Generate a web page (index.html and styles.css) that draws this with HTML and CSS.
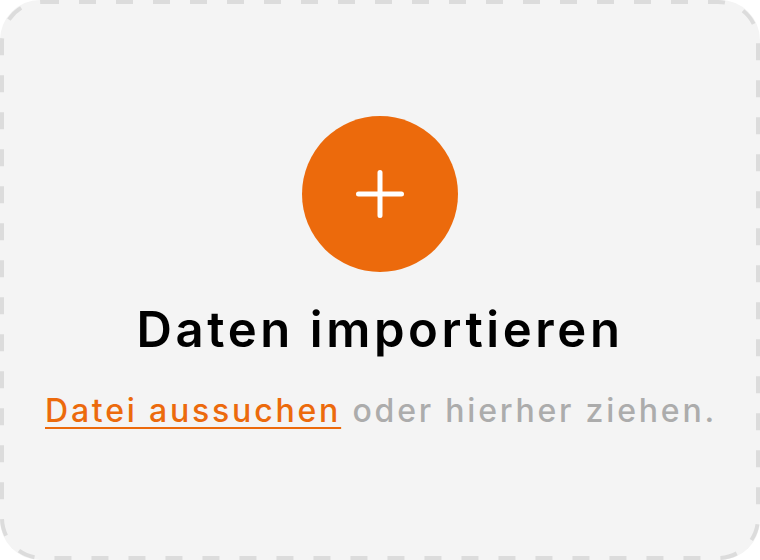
FILE: index.html
```html
<!DOCTYPE html>
<html lang="de">
<head>
<meta charset="utf-8">
<title>Daten importieren</title>
<link rel="stylesheet" href="styles.css">
</head>
<body>
<div class="dropzone">
  <svg class="frame" width="760" height="560" viewBox="0 0 760 560" aria-hidden="true">
    <rect x="2" y="2" width="756" height="556" rx="40" ry="40" fill="none" stroke="#dcdcdc" stroke-width="4" stroke-dasharray="17 20"/>
  </svg>
  <div class="icon-circle">
    <svg width="48" height="48" viewBox="0 0 48 48" aria-hidden="true">
      <path d="M24 2.5V45.5M2.5 24H45.5" stroke="#fff" stroke-width="5" stroke-linecap="round" fill="none"/>
    </svg>
  </div>
  <h1 class="title">Daten importieren</h1>
  <p class="hint"><a class="pick" href="#">Datei aussuchen</a> oder hierher ziehen.</p>
</div>
</body>
</html>
```
FILE: styles.css
```css
html, body {
  margin: 0;
  padding: 0;
  background: #ffffff;
}
body {
  font-family: "Inter", "Open Sans", sans-serif;
}
.dropzone {
  position: relative;
  box-sizing: border-box;
  width: 760px;
  height: 560px;
  border-radius: 40px;
  background: #f4f4f4;
  display: flex;
  flex-direction: column;
  align-items: center;
  padding-top: 116px;
}
.frame {
  position: absolute;
  left: 0;
  top: 0;
}
.icon-circle {
  width: 156px;
  height: 156px;
  border-radius: 50%;
  background: #ec6a0c;
  display: flex;
  align-items: center;
  justify-content: center;
}
.title {
  margin: 30px 0 0;
  padding-left: 0;
  font-size: 49px;
  line-height: 56px;
  font-weight: 600;
  color: #000;
  letter-spacing: 3.6px;
}
.hint {
  margin: 33px 0 0;
  padding-left: 2px;
  font-size: 32px;
  line-height: 40px;
  color: #acacac;
  font-weight: 500;
  letter-spacing: 2.8px;
}
.pick {
  color: #ec6a0c;
  text-decoration: underline;
  text-decoration-thickness: 2px;
  text-underline-offset: 5px;
}
```
